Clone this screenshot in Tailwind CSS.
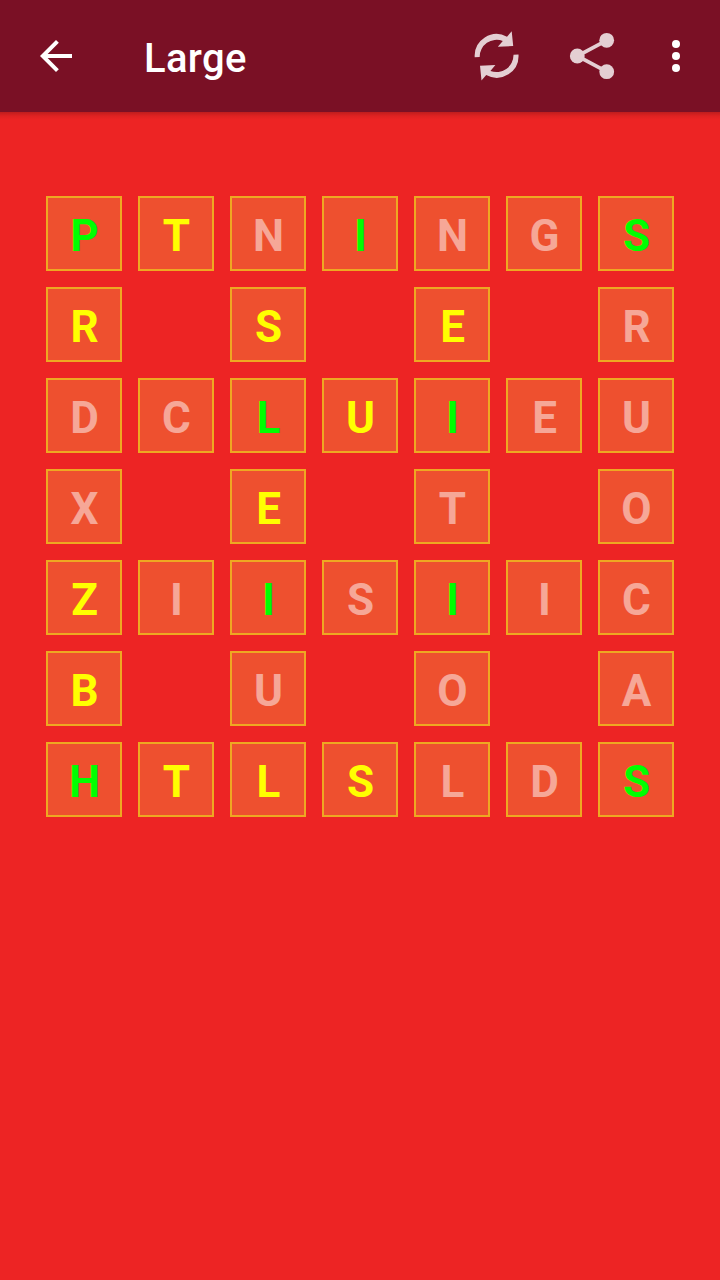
<!DOCTYPE html>
<html lang="en">
<head>
<meta charset="utf-8">
<title>Large</title>
<script src="https://cdn.jsdelivr.net/npm/@tailwindcss/browser@4"></script>
</head>
<body class="bg-[#ed2424] font-['Roboto',sans-serif]">
<div class="flex h-[1280px] w-[720px] flex-col overflow-hidden">
  <header class="flex h-28 shrink-0 items-center bg-[#7a1025]">
    <svg class="ml-8 size-12" viewBox="0 0 24 24" fill="#fff"><path d="M20 11H7.83l5.59-5.59L12 4l-8 8 8 8 1.41-1.41L7.83 13H20v-2z"/></svg>
    <h1 class="ml-16 pt-[5px] text-[40px] leading-none font-medium tracking-[0.35px] text-white">Large</h1>
    <div class="ml-auto flex items-center">
      <svg class="h-16 w-24" viewBox="448 24 96 64" fill="none">
        <g opacity=".8" fill="#fff">
          <path d="M474.7 57.3A21.9 21.9 0 0 1 507 36.7L511.7 31.3L513.2 46L497.8 46.7L502.8 40.9A17 17 0 0 0 479.7 57.1Z"/>
          <path d="M474.7 57.3A21.9 21.9 0 0 1 507 36.7L511.7 31.3L513.2 46L497.8 46.7L502.8 40.9A17 17 0 0 0 479.7 57.1Z" transform="rotate(180 496.6 55.9)"/>
        </g>
      </svg>
      <svg class="h-16 w-24" viewBox="544 24 96 64">
        <g opacity=".8" fill="#fff">
          <path d="M606.7 40.3L577.3 56L606.7 71.7" fill="none" stroke="#fff" stroke-width="3.7"/>
          <circle cx="606.7" cy="40.3" r="7.4"/><circle cx="577.3" cy="56" r="7.4"/><circle cx="606.7" cy="71.7" r="7.4"/>
        </g>
      </svg>
      <svg class="h-16 w-20" viewBox="640 24 80 64" fill="#fff"><circle cx="676" cy="44" r="4"/><circle cx="676" cy="56" r="4"/><circle cx="676" cy="68" r="4"/></svg>
    </div>
  </header>
  <div class="h-2 shrink-0 bg-linear-to-b from-black/20 via-black/6 to-transparent"></div>
  <main id="board" class="mx-auto mt-[76px] grid grid-cols-[repeat(7,76px)] auto-rows-[75px] gap-4"></main>
</div>
<script>
  // Letters row by row; the second list gives each state: g = right place, y = wrong place, w = unused.
  const letters = ["PTNINGS", "R S E R", "DCLUIEU", "X E T O", "ZIISIIC", "B U O A", "HTLSLDS"];
  const states  = ["gywgwwg", "y y y w", "wwgygww", "w y w w", "ywgwgww", "y w w w", "gyyywwg"];
  const tone = { g: "text-[#00ff00]", y: "text-[#ffff00]", w: "text-white/50" };
  const board = document.getElementById("board");
  letters.forEach((row, r) => [...row].forEach((ch, c) => {
    const cell = document.createElement("div");
    if (ch !== " ") {
      cell.className = "flex items-center justify-center border-2 border-[#eea822] bg-[#ee502f] pt-[5px] pl-px text-[44px] leading-none font-bold " + tone[states[r][c]];
      cell.textContent = ch;
    }
    board.append(cell);
  }));
</script>
</body>
</html>
